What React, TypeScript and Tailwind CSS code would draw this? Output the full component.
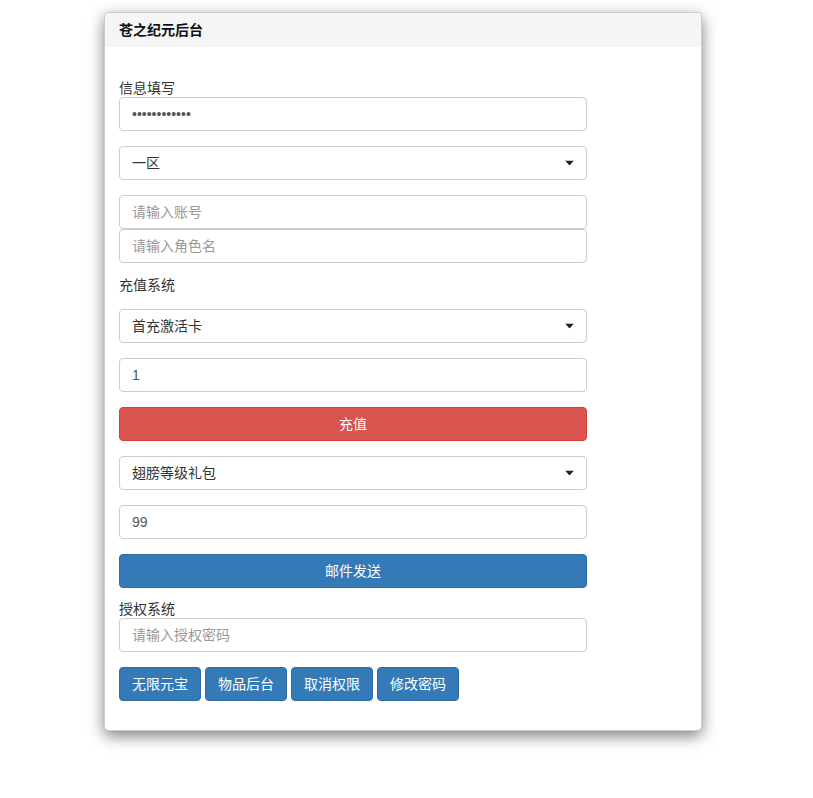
const font = { fontFamily: '"Liberation Sans", "Noto Sans CJK SC", sans-serif' };

function Caret() {
  return (
    <svg className="absolute right-[12px] top-1/2 -translate-y-1/2" width="9" height="5" viewBox="0 0 9 5">
      <path d="M0 0h9L4.5 5z" fill="#222" />
    </svg>
  );
}

function Select({ value }: { value: string }) {
  return (
    <div className="relative flex h-[34px] w-[468px] items-center rounded border border-[#ccc] bg-white px-3 text-sm leading-5 text-[#333]">
      {value}
      <Caret />
    </div>
  );
}

function Input({ value, placeholder, type = "text" }: { value?: string; placeholder?: string; type?: string }) {
  return (
    <input
      readOnly
      type={type}
      defaultValue={value}
      placeholder={placeholder}
      style={font}
      className="block h-[34px] w-[468px] rounded border border-[#ccc] bg-white px-3 text-sm text-[#555] outline-none placeholder:text-[#999]"
    />
  );
}

export default function App() {
  return (
    <div className="min-h-screen bg-white" style={font}>
      <div className="ml-[104px] mt-[12px] w-[598px] overflow-hidden rounded-[5px] border border-black/20 bg-white shadow-[0_5px_15px_rgba(0,0,0,0.5)]">
        {/* Header */}
        <div className="flex h-[34px] items-center bg-[#f5f5f5] px-[14px] text-sm font-bold text-[#111]">
          苍之纪元后台
        </div>

        {/* Body */}
        <div className="px-[14px] pb-[29px] pt-[33px] text-sm text-[#333]">
          <div className="leading-[17px]">信息填写</div>
          <Input type="password" value="123456789012" />
          <div className="mt-[15px]">
            <Select value="一区" />
          </div>
          <div className="mt-[15px]">
            <Input placeholder="请输入账号" />
            <Input placeholder="请输入角色名" />
          </div>

          <div className="mb-[15px] mt-[14px] leading-[17px]">充值系统</div>
          <Select value="首充激活卡" />
          <div className="mt-[15px]">
            <Input value="1" />
          </div>
          <button className="mt-[15px] flex h-[34px] w-[468px] items-center justify-center rounded border border-[#d43f3a] bg-[#d9534f] text-sm text-white">
            充值
          </button>
          <div className="mt-[15px]">
            <Select value="翅膀等级礼包" />
          </div>
          <div className="mt-[15px]">
            <Input value="99" />
          </div>
          <button className="mt-[15px] flex h-[34px] w-[468px] items-center justify-center rounded border border-[#2e6da4] bg-[#337ab7] text-sm text-white">
            邮件发送
          </button>

          <div className="mt-[13px] leading-[17px]">授权系统</div>
          <Input placeholder="请输入授权密码" />

          <div className="mt-[15px] flex gap-[4px]">
            {["无限元宝", "物品后台", "取消权限", "修改密码"].map((t) => (
              <button
                key={t}
                className="flex h-[34px] items-center rounded border border-[#2e6da4] bg-[#337ab7] px-3 text-sm text-white"
              >
                {t}
              </button>
            ))}
          </div>
        </div>
      </div>
    </div>
  );
}
